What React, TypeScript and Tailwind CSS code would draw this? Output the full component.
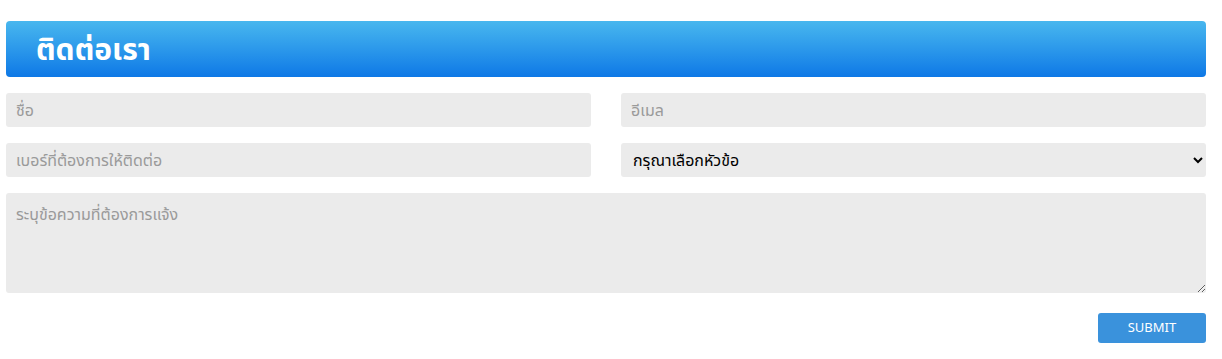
import React, { useState } from "react";

const field =
  "w-full h-[34px] px-[10px] bg-[#ebebeb] rounded-[3px] text-[16px] text-black placeholder:text-[#9a9a9a] outline-none";

const App = () => {
  const [form, setForm] = useState({
    name: "",
    email: "",
    phone: "",
    topic: "",
    message: "",
  });

  const handleChange = (
    e: React.ChangeEvent<HTMLInputElement | HTMLTextAreaElement | HTMLSelectElement>
  ) => {
    setForm({ ...form, [e.target.name]: e.target.value });
  };

  return (
    <div
      className="min-h-screen bg-white pt-[21px] px-[6px] pb-4"
      style={{ fontFamily: '"Noto Sans", "Noto Sans Thai", Tahoma, sans-serif' }}
    >
      <div className="w-[1200px]">
        <div className="h-[56px] rounded-[4px] bg-gradient-to-b from-[#48b7ee] to-[#0d78e6] flex items-center pl-[30px]">
          <h1 className="text-white text-[30px] font-bold leading-none">ติดต่อเรา</h1>
        </div>

        <form className="mt-[16px]" onSubmit={(e) => e.preventDefault()}>
          <div className="grid grid-cols-2 gap-x-[30px] gap-y-[16px]">
            <input
              name="name"
              value={form.name}
              onChange={handleChange}
              placeholder="ชื่อ"
              className={field}
            />
            <input
              name="email"
              type="email"
              value={form.email}
              onChange={handleChange}
              placeholder="อีเมล"
              className={field}
            />
            <input
              name="phone"
              value={form.phone}
              onChange={handleChange}
              placeholder="เบอร์ที่ต้องการให้ติดต่อ"
              className={field}
            />
            <select
              name="topic"
              value={form.topic}
              onChange={handleChange}
              className="w-full h-[34px] px-[8px] bg-[#ebebeb] rounded-[3px] text-[16px] text-black outline-none"
            >
              <option value="">กรุณาเลือกหัวข้อ</option>
              <option value="general">สอบถามทั่วไป</option>
              <option value="service">บริการ</option>
            </select>
          </div>

          <textarea
            name="message"
            value={form.message}
            onChange={handleChange}
            placeholder="ระบุข้อความที่ต้องการแจ้ง"
            className="mt-[16px] block w-full h-[100px] px-[10px] py-[9px] bg-[#ebebeb] rounded-[3px] text-[16px] text-black placeholder:text-[#9a9a9a] outline-none"
          />

          <div className="flex justify-end mt-[20px]">
            <button
              type="submit"
              className="w-[108px] h-[30px] rounded-[3px] bg-[#3a92dc] text-white text-[13px]"
            >
              SUBMIT
            </button>
          </div>
        </form>
      </div>
    </div>
  );
};

export default App;
